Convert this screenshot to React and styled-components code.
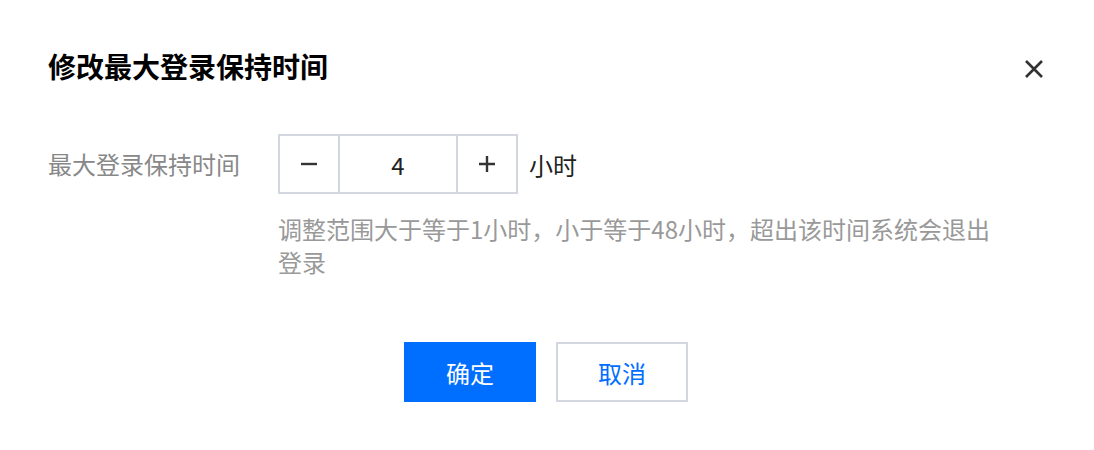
import React, { useState } from "react";
import styled, { createGlobalStyle } from "styled-components";

const Global = createGlobalStyle`
  html, body { margin: 0; padding: 0; background: #fff; }
  body { font-family: "Noto Sans CJK SC", "Noto Sans", sans-serif; }
  * { box-sizing: border-box; }
`;

const Dialog = styled.div`
  width: 1094px;
  height: 450px;
  background: #fff;
  padding: 46px 48px 0 48px;
  display: flex;
  flex-direction: column;
`;

const Header = styled.div`
  display: flex;
  align-items: center;
  justify-content: space-between;
  height: 40px;
`;

const Title = styled.h2`
  margin: 0;
  font-size: 28px;
  line-height: 40px;
  font-weight: 700;
  color: #000;
`;

const CloseButton = styled.button`
  width: 24px;
  height: 24px;
  padding: 0;
  border: none;
  background: transparent;
  display: flex;
  align-items: center;
  justify-content: center;
  cursor: pointer;
  margin-top: 6px;
`;

const Body = styled.div`
  margin-top: 48px;
  display: grid;
  grid-template-columns: 230px 1fr;
  row-gap: 18px;
`;

const Label = styled.div`
  font-size: 24px;
  line-height: 60px;
  color: #888;
`;

const Control = styled.div`
  display: flex;
  align-items: center;
  gap: 11px;
`;

const Stepper = styled.div`
  display: flex;
  height: 60px;
  border: 2px solid #d3d7e0;
`;

const StepButton = styled.button`
  width: 60px;
  height: 100%;
  border: none;
  background: #fff;
  padding: 0;
  display: flex;
  align-items: center;
  justify-content: center;
  cursor: pointer;
  border-left: ${(p) => (p.$divider === "left" ? "2px solid #d3d7e0" : "none")};
  border-right: ${(p) => (p.$divider === "right" ? "2px solid #d3d7e0" : "none")};
`;

const ValueInput = styled.input`
  width: 116px;
  border: none;
  outline: none;
  text-align: center;
  font-family: "Noto Sans CJK SC", "Noto Sans", sans-serif;
  font-size: 24px;
  color: #222;
  background: #fff;
  padding: 0;
`;

const Unit = styled.span`
  font-size: 24px;
  color: #222;
`;

const Hint = styled.div`
  grid-column: 2;
  width: 730px;
  font-size: 24px;
  line-height: 33px;
  color: #999;
`;

const Footer = styled.div`
  margin-top: 64px;
  padding-right: 2px;
  display: flex;
  justify-content: center;
  gap: 20px;
`;

const Button = styled.button`
  width: 132px;
  height: 60px;
  font-family: "Noto Sans CJK SC", "Noto Sans", sans-serif;
  font-size: 24px;
  cursor: pointer;
  border: 2px solid ${(p) => (p.$primary ? "#006eff" : "#d3d7e0")};
  background: ${(p) => (p.$primary ? "#006eff" : "#fff")};
  color: ${(p) => (p.$primary ? "#fff" : "#006eff")};
`;

const Icon = ({ d, size = 16 }) => (
  <svg width={size} height={size} viewBox="0 0 16 16" fill="none">
    <path d={d} stroke="#333" strokeWidth="2.4" strokeLinecap="butt" />
  </svg>
);

export default function App() {
  const [value, setValue] = useState(4);
  return (
    <>
      <Global />
      <Dialog>
        <Header>
          <Title>修改最大登录保持时间</Title>
          <CloseButton aria-label="关闭">
            <svg width="20" height="20" viewBox="0 0 20 20" fill="none">
              <path d="M2 2L18 18M18 2L2 18" stroke="#333" strokeWidth="2.6" />
            </svg>
          </CloseButton>
        </Header>
        <Body>
          <Label>最大登录保持时间</Label>
          <Control>
            <Stepper>
              <StepButton $divider="right" onClick={() => setValue(Math.max(1, value - 1))}>
                <Icon d="M0 8H16" />
              </StepButton>
              <ValueInput value={value} onChange={(e) => setValue(e.target.value)} />
              <StepButton $divider="left" onClick={() => setValue(Math.min(48, Number(value) + 1))}>
                <Icon d="M0 8H16M8 0V16" />
              </StepButton>
            </Stepper>
            <Unit>小时</Unit>
          </Control>
          <Hint>调整范围大于等于1小时，小于等于48小时，超出该时间系统会退出登录</Hint>
        </Body>
        <Footer>
          <Button $primary>确定</Button>
          <Button>取消</Button>
        </Footer>
      </Dialog>
    </>
  );
}
